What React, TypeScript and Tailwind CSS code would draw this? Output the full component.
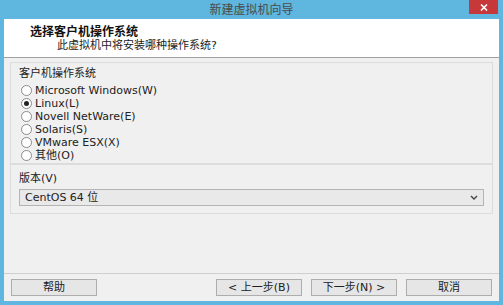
import React from 'react';

const font = { fontFamily: '"DejaVu Sans", "Noto Sans CJK SC", sans-serif' };

const Radio = ({ label, checked }: { label: string; checked?: boolean }) => (
  <div className="flex items-center h-[13px] gap-[3px]">
    <span className="w-[11px] h-[11px] shrink-0 rounded-full border border-[#8a8a8a] bg-white flex items-center justify-center">
      {checked && <span className="w-[5px] h-[5px] rounded-full bg-[#222]" />}
    </span>
    <span className="text-[11px] leading-[13px] text-[#222]">{label}</span>
  </div>
);

const Btn = ({ children }: { children: React.ReactNode }) => (
  <div className="w-[86px] h-[17px] border border-[#adadad] bg-[#e6e6e6] flex items-center justify-center text-[11px] leading-[13px] text-[#222]">
    {children}
  </div>
);

export default function App() {
  return (
    <div className="w-[503px] h-[305px] bg-[#5fb6de] flex flex-col overflow-hidden" style={font}>
      {/* title bar */}
      <div className="h-[19px] relative flex items-center justify-center">
        <span className="text-[12px] text-[#4a4a4a] leading-[14px]">新建虚拟机向导</span>
        <div className="absolute right-[5px] top-0 w-[29px] h-[14px] bg-[#c7383b] flex items-center justify-center">
          <svg width="8" height="7" viewBox="0 0 8 7">
            <path d="M1 0.5 L7 6.5 M7 0.5 L1 6.5" stroke="#fff" strokeWidth="1.6" />
          </svg>
        </div>
      </div>
      <div className="flex-1 mx-[4px] mb-[4px] bg-[#f0f0f0] flex flex-col">
        {/* header */}
        <div className="h-[39px] bg-white border-b border-[#a0a0a0] pl-[26px] pt-[6px]">
          <div className="text-[12px] font-bold leading-[14px] text-[#111]">选择客户机操作系统</div>
          <div className="text-[11px] leading-[13px] text-[#222] pl-[27px]">此虚拟机中将安装哪种操作系统?</div>
        </div>
        {/* body */}
        <div className="flex-1 px-[6px] pt-[4px] flex flex-col">
          <div className="border border-[#dcdcdc] h-[102px] px-[8px] pt-[4px]">
            <div className="text-[11px] leading-[13px] text-[#222] mb-[4px]">客户机操作系统</div>
            <div className="flex flex-col pl-[2px]">
              <Radio label="Microsoft Windows(W)" />
              <Radio label="Linux(L)" checked />
              <Radio label="Novell NetWare(E)" />
              <Radio label="Solaris(S)" />
              <Radio label="VMware ESX(X)" />
              <Radio label="其他(O)" />
            </div>
          </div>
          <div className="border border-[#dcdcdc] h-[50px] px-[8px] pt-[7px]">
            <div className="text-[11px] leading-[13px] text-[#222] mb-[4px]">版本(V)</div>
            <div className="h-[17px] border border-[#b4b4b4] bg-[#e9e9e9] flex items-center justify-between pl-[5px] pr-[5px]">
              <span className="text-[11px] leading-[13px] text-[#222]">CentOS 64 位</span>
              <svg width="8" height="5" viewBox="0 0 8 5">
                <path d="M1 1 L4 4 L7 1" stroke="#444" strokeWidth="1.4" fill="none" />
              </svg>
            </div>
          </div>
        </div>
        {/* footer */}
        <div className="border-t border-[#cfcfcf] h-[28px] flex items-center px-[7px]">
          <Btn>帮助</Btn>
          <div className="flex-1" />
          <div className="flex gap-[9px]">
            <Btn>&lt; 上一步(B)</Btn>
            <Btn>下一步(N) &gt;</Btn>
            <Btn>取消</Btn>
          </div>
        </div>
      </div>
    </div>
  );
}
